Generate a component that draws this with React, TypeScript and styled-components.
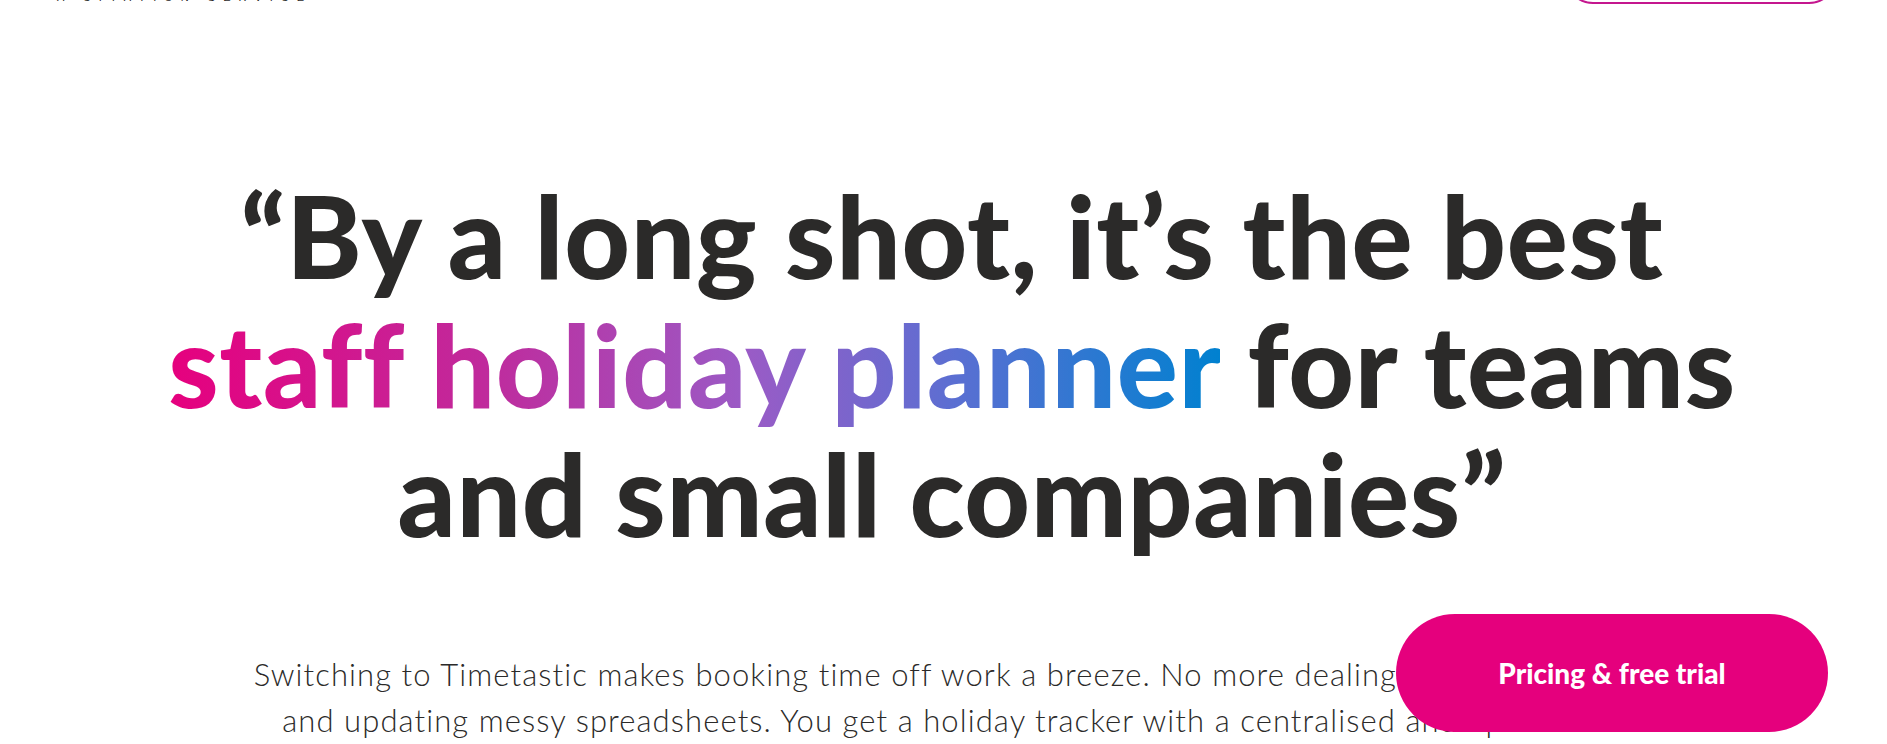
import styled, { createGlobalStyle } from "styled-components";

const GlobalStyle = createGlobalStyle`
  html, body {
    margin: 0;
    padding: 0;
    background: #ffffff;
    overflow: hidden;
  }

  body {
    font-family: "Lato", "Noto Sans", sans-serif;
    color: #2b2a29;
  }
`;

const Page = styled.div`
  width: 100%;
  min-height: 744px;
  box-sizing: border-box;
`;

const Header = styled.header`
  display: flex;
  align-items: flex-end;
  justify-content: space-between;
  height: 60px;
  margin-top: -56px;
  padding: 0 50px 0 57px;
  box-sizing: border-box;
`;

const Brand = styled.div`
  display: flex;
  flex-direction: column;
  padding-bottom: 1px;
`;

const Tagline = styled.span`
  font-family: "Liberation Sans", Arial, sans-serif;
  font-size: 11px;
  line-height: 11px;
  letter-spacing: 0.73em;
  text-transform: uppercase;
  color: #2b2a29;
`;

const OutlineButton = styled.a`
  display: flex;
  align-items: center;
  justify-content: center;
  width: 272px;
  height: 56px;
  border: 2px solid #c4168e;
  border-radius: 28px;
  box-sizing: border-box;
  color: #c4168e;
  font-weight: 700;
  font-size: 18px;
  text-decoration: none;
`;

const Hero = styled.section`
  display: flex;
  flex-direction: column;
  align-items: center;
  padding: 166px 0 0 17px;
`;

const Headline = styled.h1`
  margin: 0;
  font-family: "Lato", sans-serif;
  font-weight: 900;
  font-size: 114px;
  line-height: 129px;
  letter-spacing: 0.006em;
  text-align: center;
  color: #2b2a29;
`;

const Gradient = styled.span`
  background: linear-gradient(90deg, #e6007e 0%, #c02a9c 30%, #9a5bc6 55%, #5a6fd2 75%, #0081d0 100%);
  -webkit-background-clip: text;
  background-clip: text;
  color: transparent;
`;

const Intro = styled.p`
  max-width: 1405px;
  margin: 94px 0 0;
  font-family: "Lato", sans-serif;
  font-weight: 300;
  font-size: 31px;
  line-height: 46px;
  letter-spacing: 0.035em;
  text-align: center;
  color: #2b2a29;
`;

const CtaButton = styled.a`
  position: fixed;
  right: 59px;
  bottom: 12px;
  display: flex;
  align-items: center;
  justify-content: center;
  width: 432px;
  height: 118px;
  border-radius: 59px;
  background: #e5007d;
  color: #ffffff;
  font-family: "Lato", sans-serif;
  font-weight: 900;
  font-size: 28px;
  letter-spacing: 0;
  text-decoration: none;
`;

export default function App() {
  return (
    <Page>
      <GlobalStyle />
      <Header>
        <Brand>
          <Tagline>A Citation Service</Tagline>
        </Brand>
        <OutlineButton href="#">Sign in</OutlineButton>
      </Header>
      <Hero>
        <Headline>
          “By a long shot, it’s the best
          <br />
          <Gradient>staff holiday planner</Gradient> for teams
          <br />
          and small companies”
        </Headline>
        <Intro>
          Switching to Timetastic makes booking time off work a breeze. No more dealing with paper forms
          and updating messy spreadsheets. You get a holiday tracker with a centralised and up-to-date view
          of who’s off and when.
        </Intro>
      </Hero>
      <CtaButton href="#">Pricing &amp; free trial</CtaButton>
    </Page>
  );
}
